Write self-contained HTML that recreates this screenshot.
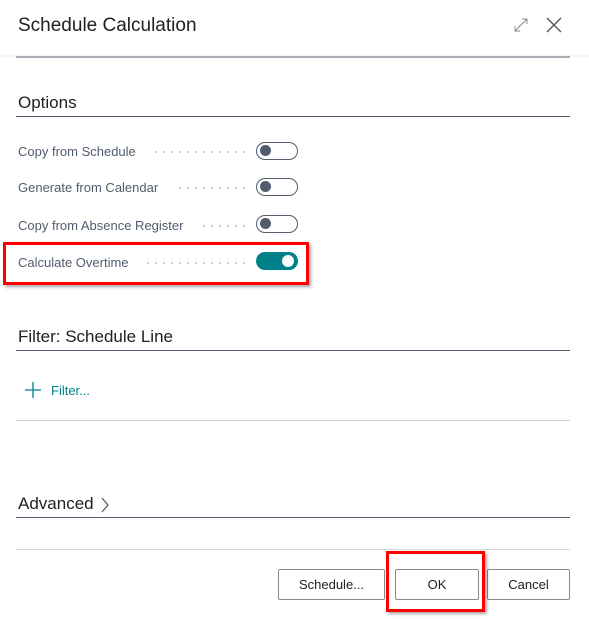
<!DOCTYPE html>
<html><head><style>
body{margin:0;width:589px;height:619px;background:#fff;font-family:"Liberation Sans",sans-serif;position:relative;overflow:hidden;color:#212121}
.a{position:absolute}
.lbl{font-size:13px;color:#505c6d;}
.dots{height:2px;background-image:radial-gradient(circle,#c0c4ca 0.9px,transparent 1.1px);background-size:8px 2px;background-repeat:repeat-x}
.tg{position:absolute;left:256px;width:42px;height:18px;border:1.5px solid #505c6d;border-radius:9px;box-sizing:border-box}
.tg::after{content:"";position:absolute;left:3px;top:2px;width:11px;height:11px;border-radius:50%;background:#505c6d}
.btn{position:absolute;top:569px;height:31px;border:1px solid #8a8a8a;border-radius:2px;box-sizing:border-box;font-size:13px;text-align:center;line-height:29px;background:#fff}
.red{position:absolute;border:3px solid #f00;box-sizing:border-box;box-shadow:2px 2px 3px rgba(0,0,0,.35)}
</style></head><body>
<div class="a" style="left:18px;top:15px;font-size:19px;color:#212121">Schedule Calculation</div>
<svg class="a" style="left:514px;top:18px" width="14" height="14" viewBox="0 0 14 14"><path d="M1 13L13 1M8 1h5v5M1 8v5h5" stroke="#888" fill="none" stroke-width="0.9"/></svg>
<svg class="a" style="left:545px;top:16px" width="18" height="18" viewBox="0 0 18 18"><path d="M2 2L16 16M16 2L2 16" stroke="#555" stroke-width="1.4"/></svg>
<div class="a" style="left:0;top:55px;width:589px;height:2px;background:#f6f6f6"></div>
<div class="a" style="left:16px;top:56px;width:554px;height:2px;background:#a7abb3"></div>

<div class="a" style="left:18px;top:93px;font-size:17px">Options</div>
<div class="a" style="left:16px;top:116px;width:554px;height:1px;background:#505c6d"></div>

<div class="a lbl" style="left:18px;top:144px">Copy from Schedule</div><div class="a dots" style="left:152px;top:151px;width:94px"></div><div class="tg" style="top:142px"></div>
<div class="a lbl" style="left:18px;top:180px">Generate from Calendar</div><div class="a dots" style="left:176px;top:187px;width:70px"></div><div class="tg" style="top:178px"></div>
<div class="a lbl" style="left:18px;top:218px">Copy from Absence Register</div><div class="a dots" style="left:200px;top:225px;width:46px"></div><div class="tg" style="top:215px"></div>
<div class="a lbl" style="left:18px;top:255px">Calculate Overtime</div><div class="a dots" style="left:144px;top:262px;width:102px"></div>
<div class="a" style="left:256px;top:252px;width:42px;height:18px;border-radius:9px;background:#00818a"><div class="a" style="right:4px;top:3px;width:12px;height:12px;border-radius:50%;background:#fff"></div></div>
<div class="red" style="left:3px;top:242px;width:306px;height:43px"></div>

<div class="a" style="left:18px;top:327px;font-size:17px">Filter: Schedule Line</div>
<div class="a" style="left:16px;top:350px;width:554px;height:1px;background:#505c6d"></div>
<svg class="a" style="left:25px;top:382px" width="16" height="16"><path d="M8 0V16M0 8H16" stroke="#00818a" stroke-width="1.3"/></svg>
<div class="a" style="left:51px;top:383px;font-size:13px;color:#00818a">Filter...</div>
<div class="a" style="left:16px;top:420px;width:554px;height:1px;background:#d0d0d0"></div>

<div class="a" style="left:18px;top:494px;font-size:17px">Advanced</div>
<svg class="a" style="left:100px;top:497px" width="10" height="16"><path d="M2 1L8 8L2 15" stroke="#555" fill="none" stroke-width="1.2"/></svg>
<div class="a" style="left:16px;top:517px;width:554px;height:1px;background:#505c6d"></div>
<div class="a" style="left:16px;top:549px;width:554px;height:1px;background:#d6d6d6"></div>

<div class="btn" style="left:278px;width:107px">Schedule...</div>
<div class="btn" style="left:395px;width:84px">OK</div>
<div class="btn" style="left:487px;width:83px">Cancel</div>
<div class="red" style="left:386px;top:551px;width:99px;height:61px"></div>
</body></html>
